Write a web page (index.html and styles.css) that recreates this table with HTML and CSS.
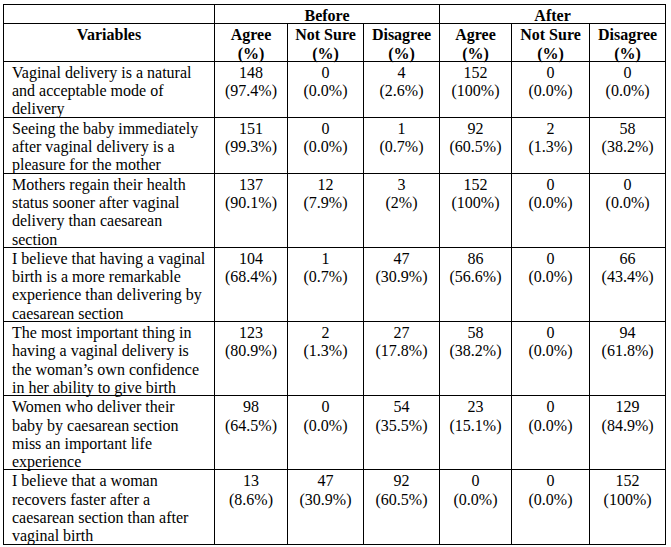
FILE: index.html
```html
<!DOCTYPE html>
<html>
<head>
<meta charset="utf-8">
<link rel="stylesheet" href="styles.css">
</head>
<body>
<table class="tbl">
  <colgroup>
    <col class="c-var">
    <col class="c-a">
    <col class="c-n">
    <col class="c-d">
    <col class="c-a2">
    <col class="c-n2">
    <col class="c-d2">
  </colgroup>
  <thead>
    <tr>
      <th><div class="cell"></div></th>
      <th colspan="3"><div class="cell">Before</div></th>
      <th colspan="3"><div class="cell">After</div></th>
    </tr>
    <tr>
      <th><div class="cell">Variables</div></th>
      <th><div class="cell">Agree<br>(%)</div></th>
      <th><div class="cell">Not Sure<br>(%)</div></th>
      <th><div class="cell">Disagree<br>(%)</div></th>
      <th><div class="cell">Agree<br>(%)</div></th>
      <th><div class="cell">Not Sure<br>(%)</div></th>
      <th><div class="cell">Disagree<br>(%)</div></th>
    </tr>
  </thead>
  <tbody>
    <tr>
      <td class="var"><div class="cell">Vaginal delivery is a natural<br>and acceptable mode of<br>delivery</div></td>
      <td><div class="cell">148<br>(97.4%)</div></td><td><div class="cell">0<br>(0.0%)</div></td><td><div class="cell">4<br>(2.6%)</div></td>
      <td><div class="cell">152<br>(100%)</div></td><td><div class="cell">0<br>(0.0%)</div></td><td><div class="cell">0<br>(0.0%)</div></td>
    </tr>
    <tr>
      <td class="var"><div class="cell">Seeing the baby immediately<br>after vaginal delivery is a<br>pleasure for the mother</div></td>
      <td><div class="cell">151<br>(99.3%)</div></td><td><div class="cell">0<br>(0.0%)</div></td><td><div class="cell">1<br>(0.7%)</div></td>
      <td><div class="cell">92<br>(60.5%)</div></td><td><div class="cell">2<br>(1.3%)</div></td><td><div class="cell">58<br>(38.2%)</div></td>
    </tr>
    <tr>
      <td class="var"><div class="cell">Mothers regain their health<br>status sooner after vaginal<br>delivery than caesarean<br>section</div></td>
      <td><div class="cell">137<br>(90.1%)</div></td><td><div class="cell">12<br>(7.9%)</div></td><td><div class="cell">3<br>(2%)</div></td>
      <td><div class="cell">152<br>(100%)</div></td><td><div class="cell">0<br>(0.0%)</div></td><td><div class="cell">0<br>(0.0%)</div></td>
    </tr>
    <tr>
      <td class="var"><div class="cell">I believe that having a vaginal<br>birth is a more remarkable<br>experience than delivering by<br>caesarean section</div></td>
      <td><div class="cell">104<br>(68.4%)</div></td><td><div class="cell">1<br>(0.7%)</div></td><td><div class="cell">47<br>(30.9%)</div></td>
      <td><div class="cell">86<br>(56.6%)</div></td><td><div class="cell">0<br>(0.0%)</div></td><td><div class="cell">66<br>(43.4%)</div></td>
    </tr>
    <tr>
      <td class="var"><div class="cell">The most important thing in<br>having a vaginal delivery is<br>the woman’s own confidence<br>in her ability to give birth</div></td>
      <td><div class="cell">123<br>(80.9%)</div></td><td><div class="cell">2<br>(1.3%)</div></td><td><div class="cell">27<br>(17.8%)</div></td>
      <td><div class="cell">58<br>(38.2%)</div></td><td><div class="cell">0<br>(0.0%)</div></td><td><div class="cell">94<br>(61.8%)</div></td>
    </tr>
    <tr>
      <td class="var"><div class="cell">Women who deliver their<br>baby by caesarean section<br>miss an important life<br>experience</div></td>
      <td><div class="cell">98<br>(64.5%)</div></td><td><div class="cell">0<br>(0.0%)</div></td><td><div class="cell">54<br>(35.5%)</div></td>
      <td><div class="cell">23<br>(15.1%)</div></td><td><div class="cell">0<br>(0.0%)</div></td><td><div class="cell">129<br>(84.9%)</div></td>
    </tr>
    <tr>
      <td class="var"><div class="cell">I believe that a woman<br>recovers faster after a<br>caesarean section than after<br>vaginal birth</div></td>
      <td><div class="cell">13<br>(8.6%)</div></td><td><div class="cell">47<br>(30.9%)</div></td><td><div class="cell">92<br>(60.5%)</div></td>
      <td><div class="cell">0<br>(0.0%)</div></td><td><div class="cell">0<br>(0.0%)</div></td><td><div class="cell">152<br>(100%)</div></td>
    </tr>
  </tbody>
</table>
</body>
</html>
```
FILE: styles.css
```css
html, body {
  margin: 0;
  padding: 0;
  background: #ffffff;
}
body {
  padding: 4px 0 0 3px;
  font-family: "Liberation Serif", "Times New Roman", serif;
  font-size: 16px;
  line-height: 18.3px;
  color: #000;
}
.tbl {
  border-collapse: collapse;
  table-layout: fixed;
  width: 662px;
}
.c-var { width: 211px; }
.c-a { width: 73px; }
.c-n { width: 76px; }
.c-d { width: 76px; }
.c-a2 { width: 72px; }
.c-n2 { width: 78px; }
.c-d2 { width: 76px; }
.tbl th,
.tbl td {
  border: 1px solid #000;
  padding: 2px 0 0 0;
  vertical-align: top;
  text-align: center;
  white-space: nowrap;
}
.tbl th {
  font-weight: bold;
}
.tbl td.var {
  text-align: left;
  padding-left: 8px;
}
.cell {
  min-height: 18.3px;
  margin-bottom: -2px;
}
```
